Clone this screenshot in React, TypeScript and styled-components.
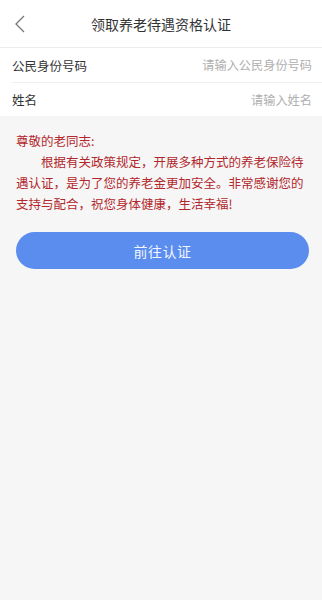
import React from "react";
import styled, { createGlobalStyle } from "styled-components";

const GlobalStyle = createGlobalStyle`
  html, body {
    margin: 0;
    padding: 0;
    background: #f6f6f7;
    font-family: "Noto Sans CJK SC", "Noto Sans", sans-serif;
  }
`;

const Page = styled.div`
  min-height: 600px;
  background: #f6f6f7;
`;

const Header = styled.header`
  position: relative;
  height: 47px;
  display: flex;
  align-items: center;
  justify-content: center;
  background: #fff;
  border-bottom: 1px solid #ececec;
`;

const BackButton = styled.button`
  position: absolute;
  left: 8px;
  top: 12px;
  width: 24px;
  height: 24px;
  padding: 0;
  border: 0;
  background: none;
  display: flex;
  align-items: center;
  justify-content: center;
`;

const Title = styled.h1`
  margin: 0;
  font-size: 14px;
  font-weight: 400;
  color: #333;
`;

const Form = styled.div`
  background: #fff;
`;

const Row = styled.label<{ $last?: boolean }>`
  height: ${(p) => (p.$last ? 33 : 34)}px;
  margin-left: 12px;
  padding-right: 10px;
  display: flex;
  align-items: center;
  justify-content: space-between;
  border-bottom: ${(p) => (p.$last ? "none" : "1px solid #efefef")};
`;

const Label = styled.span`
  font-size: 12.5px;
  color: #333;
`;

const Input = styled.input`
  flex: 1;
  min-width: 0;
  border: 0;
  outline: none;
  background: transparent;
  text-align: right;
  font-family: inherit;
  font-size: 12.2px;
  color: #333;
  padding: 0;

  &::placeholder {
    color: #b0b0b0;
  }
`;

const Notice = styled.div`
  padding: 14px 16px 0;
  color: #b2272b;
  font-size: 12.5px;
  line-height: 21px;
`;

const Para = styled.p`
  margin: 0;
  text-indent: 2em;
`;

const Greeting = styled.p`
  margin: 0;
`;

const SubmitButton = styled.button`
  display: block;
  margin: 18px 13px 0 16px;
  width: calc(100% - 29px);
  height: 37px;
  border: 0;
  border-radius: 19px;
  background: #5b8def;
  color: #f2f6ff;
  font-family: inherit;
  font-size: 14px;
  letter-spacing: 0.5px;
`;

const App: React.FC = () => {
  return (
    <Page>
      <GlobalStyle />
      <Header>
        <BackButton aria-label="返回">
          <svg width="12" height="18" viewBox="0 0 12 18">
            <path
              d="M10 1 L2 9 L10 17"
              fill="none"
              stroke="#777"
              strokeWidth="1.3"
            />
          </svg>
        </BackButton>
        <Title>领取养老待遇资格认证</Title>
      </Header>
      <Form>
        <Row>
          <Label>公民身份号码</Label>
          <Input placeholder="请输入公民身份号码" />
        </Row>
        <Row $last>
          <Label>姓名</Label>
          <Input placeholder="请输入姓名" />
        </Row>
      </Form>
      <Notice>
        <Greeting>尊敬的老同志:</Greeting>
        <Para>
          根据有关政策规定，开展多种方式的养老保险待遇认证，是为了您的养老金更加安全。非常感谢您的支持与配合，祝您身体健康，生活幸福!
        </Para>
      </Notice>
      <SubmitButton>前往认证</SubmitButton>
    </Page>
  );
};

export default App;
